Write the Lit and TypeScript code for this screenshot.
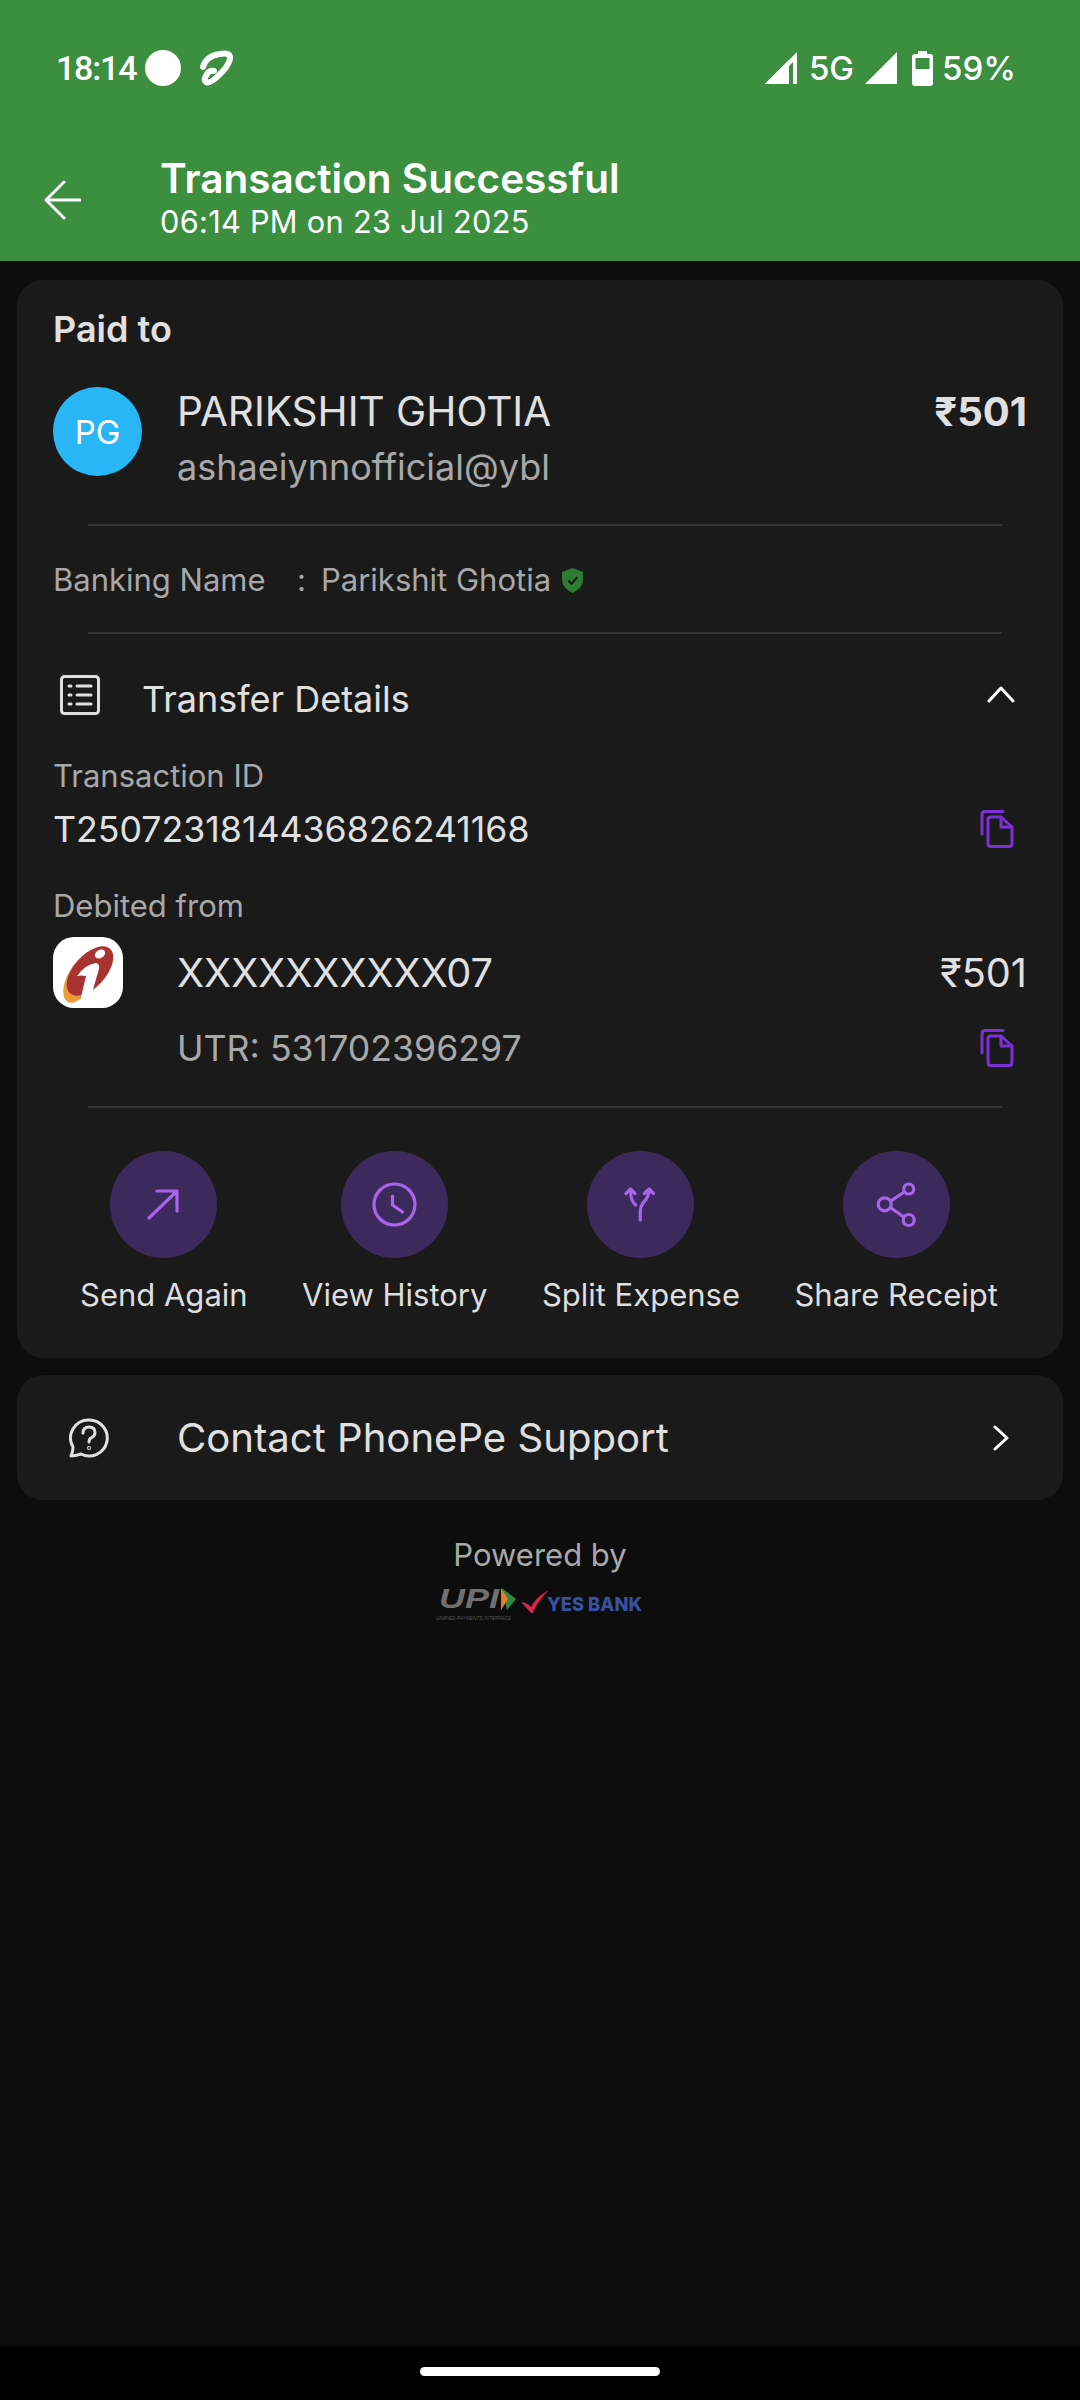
import { LitElement, html, css, svg } from 'lit';
import { customElement } from 'lit/decorators.js';

const copyIcon = html`<svg class="copy" width="34" height="38" viewBox="0 0 34 38" fill="none" stroke="#7b2fd6" stroke-width="3" stroke-linejoin="round" stroke-linecap="round">
  <path d="M2 24V4.500Q2 1.500 5 1.500H23" />
  <path d="M8 9.500Q8 7 10.500 7H21L32 17V33.500Q32 36.500 29 36.500H11Q8 36.500 8 33.500Z" />
  <path d="M21 7V17H32" />
</svg>`;

const actions = [
  {
    label: 'Send Again',
    icon: svg`<path d="M39 67L67 40M47 40H67V60" />`,
  },
  {
    label: 'View History',
    icon: svg`<circle cx="53.500" cy="53.500" r="20.500" /><path d="M51.500 45V54L61.500 61" />`,
  },
  {
    label: 'Split Expense',
    icon: svg`<path d="M53.300 69V60Q53.300 56 56 52Q62 46 62 39M48.700 54Q43.500 50 43.500 39M39 42.500L43.500 38L48 42.500M57.500 42.500L62 38L66.500 42.500" />`,
  },
  {
    label: 'Share Receipt',
    icon: svg`<circle cx="41.700" cy="53.300" r="6.500" /><circle cx="65.700" cy="38" r="5" /><circle cx="65.700" cy="69" r="5.500" /><path d="M48.300 49.700L60.500 41.500M48.300 57.300L60.500 65.700" />`,
  },
];

@customElement('app-root')
export class AppRoot extends LitElement {
  static styles = css`
    :host {
      display: block;
      width: 1080px;
      height: 2400px;
      background: #0d0d0d;
      font-family: Inter, 'Noto Sans', sans-serif;
      color: #e0e0e0;
      overflow: hidden;
    }
    .page {
      display: flex;
      flex-direction: column;
      height: 2400px;
    }
    .header {
      height: 261px;
      background: #3b8f3f;
      color: #fff;
      flex: none;
    }
    .status {
      display: flex;
      justify-content: space-between;
      align-items: center;
      height: 136px;
      padding: 0 64px 0 56px;
      font-size: 33px;
      font-weight: 500;
    }
    .status-group {
      display: flex;
      align-items: center;
    }
    .time {
      font-family: Roboto, sans-serif;
      font-size: 34px;
      font-weight: 500;
      letter-spacing: -1.2px;
    }
    .dot {
      width: 36px;
      height: 36px;
      border-radius: 50%;
      background: #fff;
      margin: 0 17px 0 9px;
    }
    .net {
      margin: 0 11px 0 12px;
    }
    .battery {
      margin: 0 9px 0 15px;
    }
    .title-row {
      display: flex;
      align-items: flex-start;
      padding-left: 44px;
    }
    .back {
      flex: none;
      margin: 44px 79px 0 0;
    }
    .title {
      font-size: 40.500px;
      font-weight: 600;
      line-height: 48px;
      margin-top: 19px;
    }
    .subtitle {
      font-size: 30.700px;
      line-height: 38px;
      letter-spacing: 0.3px;
    }
    .card {
      margin: 19px 17px 0;
      padding: 28px 36px 42px;
      background: #1a1a1a;
      border-radius: 26px;
    }
    .paid-to {
      font-size: 36px;
      font-weight: 600;
      line-height: 42px;
    }
    .payee {
      display: flex;
      margin-top: 37px;
      height: 89px;
    }
    .avatar {
      flex: none;
      width: 89px;
      height: 89px;
      border-radius: 50%;
      background: #29b6f6;
      color: #fff;
      font-size: 33px;
      display: flex;
      align-items: center;
      justify-content: center;
      margin-right: 35px;
    }
    .payee-text {
      flex: 1;
      margin-top: 2px;
    }
    .name-row {
      display: flex;
      justify-content: space-between;
      align-items: center;
      font-size: 40.500px;
      line-height: 46px;
    }
    .amount {
      font-size: 40px;
      font-weight: 700;
    }
    .handle {
      font-size: 36px;
      line-height: 46px;
      margin-top: 9px;
      color: #a8a8a8;
    }
    .divider {
      height: 2px;
      background: #333;
      margin: 0 25px 0 35px;
    }
    .payee + .divider {
      margin-top: 48px;
    }
    .bank {
      display: flex;
      align-items: center;
      height: 106px;
      font-size: 31px;
      color: #a8a8a8;
    }
    .bank-label {
      width: 244px;
      display: inline-block;
    }
    .bank-colon {
      width: 24px;
    }
    .shield {
      margin: 3px 0 0 11px;
    }
    .transfer {
      display: flex;
      align-items: center;
      justify-content: space-between;
      height: 44px;
      padding: 43px 12px 0 7px;
      font-size: 36px;
      margin-bottom: 34px;
    }
    .transfer-left {
      display: flex;
      align-items: center;
    }
    .transfer-left svg {
      margin: 0 42px 8px 0;
    }
    .chevron-up {
      margin-bottom: 10px;
    }
    .label {
      font-size: 31px;
      line-height: 42px;
      color: #a8a8a8;
    }
    .copy-row {
      display: flex;
      align-items: center;
      justify-content: space-between;
      height: 44px;
      padding-right: 13px;
      font-size: 35.700px;
    }
    .id-row {
      margin-top: 10px;
      margin-bottom: 34px;
    }
    .bank-row {
      display: flex;
      align-items: center;
      height: 71px;
      margin-top: 10px;
      font-size: 39.700px;
    }
    .bank-logo {
      flex: none;
      margin-right: 54px;
    }
    .bank-account {
      flex: 1;
    }
    .utr {
      margin: 18px 0 36px 124px;
      color: #a8a8a8;
    }
    .actions {
      display: flex;
      justify-content: space-between;
      margin: 43px 29px 0 27px;
    }
    .action {
      display: flex;
      flex-direction: column;
      align-items: center;
      font-size: 31px;
      line-height: 42px;
      color: #dedede;
    }
    .action-circle {
      width: 107px;
      height: 107px;
      border-radius: 50%;
      background: #3d2a5c;
      margin-bottom: 16px;
    }
    .action-circle svg {
      display: block;
      fill: none;
      stroke: #a864ea;
      stroke-width: 3.200;
      stroke-linecap: round;
      stroke-linejoin: round;
    }
    .support {
      display: flex;
      align-items: center;
      justify-content: space-between;
      height: 125px;
      margin: 17px 17px 0;
      padding: 0 54px 0 52px;
      background: #1a1a1a;
      border-radius: 26px;
      font-size: 40.100px;
    }
    .support-left {
      display: flex;
      align-items: center;
    }
    .support-left svg {
      margin-right: 68px;
    }
    .powered {
      text-align: center;
      font-size: 31px;
      line-height: 42px;
      color: #a8a8a8;
      margin-top: 34px;
    }
    .partners {
      display: flex;
      justify-content: center;
      margin-top: 6px;
    }
    .upi-text {
      font-family: 'Liberation Sans', sans-serif;
      font-style: italic;
      font-weight: 700;
      font-size: 28px;
      fill: #707070;
    }
    .upi-sub {
      font-family: 'Liberation Sans', sans-serif;
      font-style: italic;
      font-size: 5.500px;
      fill: #555;
    }
    .yes-text {
      font-family: Inter, sans-serif;
      font-weight: 800;
      font-size: 19px;
      fill: #37509f;
    }
    .spacer {
      flex: 1;
    }
    .nav {
      flex: none;
      height: 54px;
      background: #000;
      display: flex;
      justify-content: center;
      padding-top: 21px;
      box-sizing: border-box;
    }
    .nav-pill {
      width: 240px;
      height: 9px;
      border-radius: 5px;
      background: #fff;
    }
  `;

  render() {
    return html`
      <div class="page">
        <div class="header">
          <div class="status">
            <div class="status-group">
              <span class="time">18:14</span>
              <span class="dot"></span>
              <svg width="36" height="36" viewBox="0 0 36 36" fill="none" stroke="#fff" stroke-linecap="round" stroke-linejoin="round">
                <path d="M5 17Q8 6 22 4Q33 2 32 9Q30 17 20 26Q12 34 8 32Q5 30 9 24Q12 20 16 21" stroke-width="6" />
              </svg>
            </div>
            <div class="status-group">
              <svg width="32" height="32" viewBox="0 0 32 32" fill="#fff"><path d="M0 32L32 0V32H28V10L10 28V32Z" /><path d="M0 32L24 8V32Z" /></svg>
              <span class="net">5G</span>
              <svg width="32" height="32" viewBox="0 0 32 32" fill="#fff"><path d="M0 32L32 0V32Z" /></svg>
              <svg class="battery" width="21" height="35" viewBox="0 0 21 35">
                <path fill="#fff" d="M6 0H15V3H18Q21 3 21 6V32Q21 35 18 35H3Q0 35 0 32V6Q0 3 3 3H6Z" />
                <rect x="3.500" y="7" width="14" height="11" fill="#3b8f3f" />
              </svg>
              <span>59%</span>
            </div>
          </div>
          <div class="title-row">
            <svg class="back" width="37" height="40" viewBox="0 0 37 40" fill="none" stroke="#fff" stroke-width="3" stroke-linecap="round" stroke-linejoin="round">
              <path d="M36 20H2M20 2L2 20L20 38" />
            </svg>
            <div>
              <div class="title">Transaction Successful</div>
              <div class="subtitle">06:14 PM on 23 Jul 2025</div>
            </div>
          </div>
        </div>

        <div class="card">
          <div class="paid-to">Paid to</div>
          <div class="payee">
            <div class="avatar">PG</div>
            <div class="payee-text">
              <div class="name-row">
                <span>PARIKSHIT GHOTIA</span>
                <span class="amount">₹501</span>
              </div>
              <div class="handle">ashaeiynnofficial@ybl</div>
            </div>
          </div>
          <div class="divider"></div>
          <div class="bank">
            <span class="bank-label">Banking Name</span>
            <span class="bank-colon">:</span>
            <span>Parikshit Ghotia</span>
            <svg class="shield" width="21" height="25" viewBox="0 0 22 26">
              <path fill="#2e7d32" d="M11 0L22 4V12Q22 21 11 26Q0 21 0 12V4Z" />
              <path fill="none" stroke="#111" stroke-width="2" d="M6.500 13L10 16.500L16 9.500" />
            </svg>
          </div>
          <div class="divider"></div>
          <div class="transfer">
            <div class="transfer-left">
              <svg width="40" height="40" viewBox="0 0 40 40" fill="none" stroke="#e0e0e0" stroke-width="3" stroke-linecap="round">
                <rect x="1.500" y="1.500" width="37" height="37" rx="3" />
                <path d="M9 11H11M17 11H31M9 20H11M17 20H31M9 29H11M17 29H31" />
              </svg>
              <span>Transfer Details</span>
            </div>
            <svg class="chevron-up" width="28" height="18" viewBox="0 0 28 18" fill="none" stroke="#fff" stroke-width="3" stroke-linecap="round" stroke-linejoin="round">
              <path d="M2 16L14 3L26 16" />
            </svg>
          </div>
          <div class="label">Transaction ID</div>
          <div class="copy-row id-row">
            <span>T2507231814436826241168</span>
            ${copyIcon}
          </div>
          <div class="label">Debited from</div>
          <div class="bank-row">
            <svg class="bank-logo" width="70" height="71" viewBox="0 0 70 71">
              <rect width="70" height="71" rx="21" fill="#fff" />
              <ellipse cx="27" cy="42" rx="26" ry="13" transform="rotate(-62 27 42)" fill="#eb9c37" />
              <ellipse cx="37" cy="34" rx="30" ry="16" transform="rotate(-48 37 34)" fill="#a93232" />
              <ellipse cx="47" cy="17" rx="5.500" ry="4" transform="rotate(-30 47 17)" fill="#fff" />
              <path fill="#fff" d="M24 39Q33 27 43 26Q47 27 46 32L38 59Q33 63 28 60L33 39Q28 38 24 39Z" />
            </svg>
            <span class="bank-account">XXXXXXXXXX07</span>
            <span>₹501</span>
          </div>
          <div class="copy-row utr">
            <span>UTR: 531702396297</span>
            ${copyIcon}
          </div>
          <div class="divider"></div>
          <div class="actions">
            ${actions.map(
              (a) => html`
                <div class="action">
                  <div class="action-circle">
                    <svg width="107" height="107" viewBox="0 0 107 107">${a.icon}</svg>
                  </div>
                  <span>${a.label}</span>
                </div>
              `,
            )}
          </div>
        </div>

        <div class="support">
          <div class="support-left">
            <svg width="40" height="40" viewBox="0 0 40 40" fill="none" stroke="#e0e0e0" stroke-width="3" stroke-linecap="round" stroke-linejoin="round">
              <path d="M20 2A18 18 0 1 1 12 36Q6 38 2 38Q4 34 4 29A18 18 0 0 1 20 2Z" />
              <path d="M14 15Q14 9 20 9Q26 9 26 14.500Q26 18 22 20Q20 21 20 24" />
              <circle cx="20" cy="30" r="0.500" />
            </svg>
            <span>Contact PhonePe Support</span>
          </div>
          <svg width="16" height="26" viewBox="0 0 16 26" fill="none" stroke="#fff" stroke-width="3" stroke-linecap="round" stroke-linejoin="round">
            <path d="M2 2L14 13L2 24" />
          </svg>
        </div>

        <div class="powered">Powered by</div>
        <div class="partners">
          <svg width="208" height="42" viewBox="0 -6 208 42">
            <text class="upi-text" x="3" y="20" textLength="60" lengthAdjust="spacingAndGlyphs">UPI</text>
            <path d="M66 0L80 11L71 22Z" fill="#2e8b3d" />
            <path d="M65 0L72 11L65 22Z" fill="#e8792a" />
            <text class="upi-sub" x="0" y="32" textLength="75" lengthAdjust="spacingAndGlyphs">UNIFIED PAYMENTS INTERFACE</text>
            <path d="M85 14L96 26Q102 12 113 2Q100 9 95 19Q92 15 85 14Z" fill="#e0234e" />
            <text class="yes-text" x="111" y="23" textLength="95" lengthAdjust="spacingAndGlyphs">YES BANK</text>
          </svg>
        </div>

        <div class="spacer"></div>
        <div class="nav"><div class="nav-pill"></div></div>
      </div>
    `;
  }
}
